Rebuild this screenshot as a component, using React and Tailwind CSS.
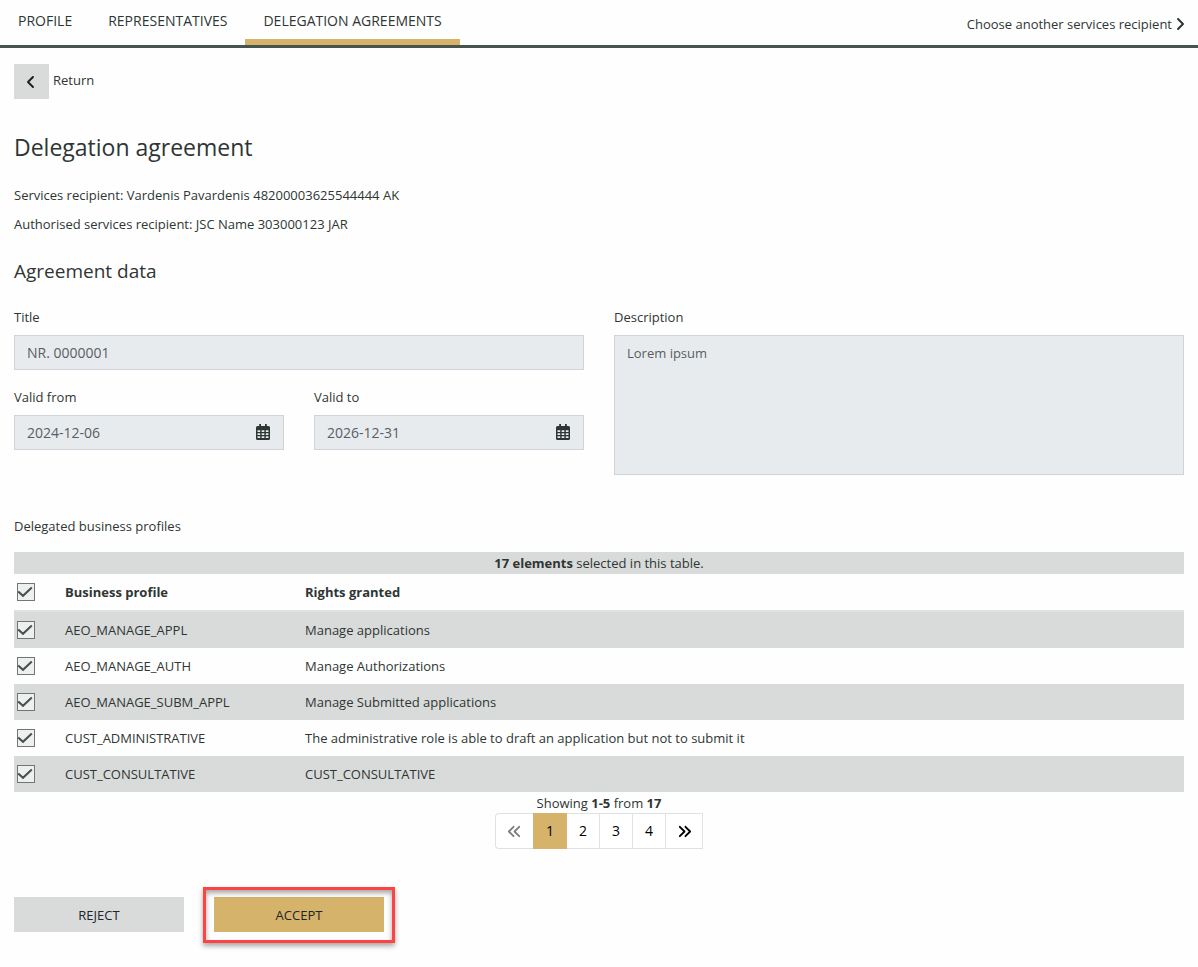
import React from "react";
import { FaAngleLeft, FaAngleRight, FaAnglesLeft, FaAnglesRight } from "react-icons/fa6";

const rows = [
  ["AEO_MANAGE_APPL", "Manage applications"],
  ["AEO_MANAGE_AUTH", "Manage Authorizations"],
  ["AEO_MANAGE_SUBM_APPL", "Manage Submitted applications"],
  ["CUST_ADMINISTRATIVE", "The administrative role is able to draft an application but not to submit it"],
  ["CUST_CONSULTATIVE", "CUST_CONSULTATIVE"],
];

function CalendarIcon() {
  return (
    <svg viewBox="0 0 14 16" className="mb-px h-4 w-[14px]" aria-hidden="true">
      <path
        fill="#2e3634"
        fillRule="evenodd"
        d="M3.200 0H5v2h4V0h1.800v2H12.500A1.500 1.500 0 0 1 14 3.500v11a1.500 1.500 0 0 1-1.500 1.500h-11A1.500 1.500 0 0 1 0 14.500v-11A1.500 1.500 0 0 1 1.500 2h1.700zM1.500 6.300v1.700h2.700V6.300zM5.650 6.300v1.700h2.700V6.300zM9.800 6.300v1.700h2.700V6.300zM1.500 9.300v1.700h2.700V9.300zM5.650 9.300v1.700h2.700V9.300zM9.800 9.300v1.700h2.700V9.300zM1.500 12.300v1.700h2.700v-1.700zM5.650 12.300v1.700h2.700v-1.700zM9.800 12.300v1.700h2.700v-1.700z"
      />
    </svg>
  );
}

function Check({ label }) {
  return (
    <span className="grid h-[18px] w-[18px] place-items-center">
      <input
        type="checkbox"
        defaultChecked
        aria-label={label}
        className="peer col-start-1 row-start-1 h-[18px] w-[18px] appearance-none border border-[#6f7775] bg-[#efefef]"
      />
      <svg
        viewBox="0 0 18 18"
        className="pointer-events-none invisible col-start-1 row-start-1 h-[18px] w-[18px] peer-checked:visible"
        aria-hidden="true"
      >
        <path d="M1.200 8.500 6 12.800 14.800 4.500" fill="none" stroke="#44524f" strokeWidth="2" />
      </svg>
    </span>
  );
}

function Tab({ children, active }) {
  return (
    <a
      href="#"
      aria-current={active ? "page" : undefined}
      className={
        active
          ? "border-b-6 border-[#d6b36a] px-[18px] pt-[11px] pb-2"
          : "border-b-6 border-transparent px-[18px] pt-[11px] pb-2"
      }
    >
      {children}
    </a>
  );
}

function DateField({ id, label, value }) {
  return (
    <div className="flex-1">
      <label htmlFor={id} className="block">{label}</label>
      <div className="mt-2 flex h-[35px] items-center border border-[#ced4da] bg-[#e8ebee] pr-[13px]">
        <input id={id} readOnly defaultValue={value} className="min-w-0 flex-1 bg-transparent px-3 text-[14px] text-[#585d63]" />
        <button type="button" aria-label={"Open calendar: " + label}>
          <CalendarIcon />
        </button>
      </div>
    </div>
  );
}

const page = "flex w-[33px] items-center justify-center border-r border-[#dee2e6]";

export default function App() {
  return (
    <div className="min-h-screen bg-[#fefefe] pb-9 font-['Open_Sans','Noto_Sans',sans-serif] text-[13px] leading-5 text-[#2e3634]">
      <header className="flex items-start justify-between border-b-3 border-[#465450]">
        <nav className="flex h-[45px] text-[14px]">
          <Tab>PROFILE</Tab>
          <Tab>REPRESENTATIVES</Tab>
          <Tab active>DELEGATION AGREEMENTS</Tab>
        </nav>
        <a href="#" className="mt-[14px] mr-[13px] flex items-center gap-[3px]">
          Choose another services recipient
          <FaAngleRight className="h-4 w-[10px]" />
        </a>
      </header>

      <main className="px-[14px] pt-4">
        <a href="#" className="flex w-fit gap-1">
          <span className="flex h-[35px] w-[35px] items-center justify-center bg-[#d9dbda] pr-0.5 text-[#1c2120]">
            <FaAngleLeft size={16} />
          </span>
          <span className="mt-[6px]">Return</span>
        </a>

        <h1 className="mt-8 text-[23px] leading-8">Delegation agreement</h1>
        <p className="mt-[22px]">Services recipient: Vardenis Pavardenis 48200003625544444 AK</p>
        <p className="mt-[9px]">Authorised services recipient: JSC Name 303000123 JAR</p>
        <h2 className="mt-[23px] text-[19px] leading-7">Agreement data</h2>

        <form className="mt-[22px] flex gap-[30px]">
          <div className="flex-1">
            <label htmlFor="title" className="block">Title</label>
            <input
              id="title"
              readOnly
              defaultValue="NR. 0000001"
              className="mt-2 block h-[35px] w-full border border-[#ced4da] bg-[#e8ebee] px-3 text-[14px] text-[#585d63]"
            />
            <div className="mt-[17px] flex gap-[30px]">
              <DateField id="from" label="Valid from" value="2024-12-06" />
              <DateField id="to" label="Valid to" value="2026-12-31" />
            </div>
          </div>
          <div className="flex-1">
            <label htmlFor="description" className="block">Description</label>
            <textarea
              id="description"
              readOnly
              defaultValue="Lorem ipsum"
              className="mt-2 block h-[140px] w-full resize-none border border-[#ced4da] bg-[#e8ebee] px-3 py-[7px] text-[#585d63]"
            />
          </div>
        </form>

        <h3 className="mt-[41px]">Delegated business profiles</h3>
        <table className="mt-4 w-full table-fixed border-separate border-spacing-0 text-left">
          <colgroup>
            <col className="w-[45px]" />
            <col className="w-[240px]" />
            <col />
          </colgroup>
          <thead>
            <tr className="h-[22px] bg-[#d9dbda]">
              <td colSpan={3} className="text-center"><b>17 elements</b> selected in this table.</td>
            </tr>
            <tr className="h-[38px] *:border-b-2 *:border-[#dee0e4]">
              <th className="pl-[3px]"><Check label="Select all" /></th>
              <th className="pl-[6px]">Business profile</th>
              <th className="pl-[6px]">Rights granted</th>
            </tr>
          </thead>
          <tbody>
            {rows.map(([name, rights]) => (
              <tr key={name} className="h-9 odd:bg-[#d9dbda]">
                <td className="pl-[3px]"><Check label={name} /></td>
                <td className="pl-[6px]">{name}</td>
                <td className="pl-[6px]">{rights}</td>
              </tr>
            ))}
          </tbody>
        </table>

        <div className="mt-[1px] flex flex-col items-center">
          <p>Showing <b>1-5</b> from <b>17</b></p>
          <nav aria-label="Pages" className="flex h-9 rounded-l border border-r-0 border-[#dee2e6] bg-white text-[14px] text-black">
            <button type="button" disabled aria-label="Previous" className="flex w-[37px] items-center justify-center text-[#7b7f82]">
              <FaAnglesLeft size={15} />
            </button>
            <button type="button" aria-current="page" className="-my-px flex w-[34px] items-center justify-center bg-[#d6b36a]">1</button>
            <button type="button" className={page}>2</button>
            <button type="button" className={page}>3</button>
            <button type="button" className={page}>4</button>
            <button type="button" aria-label="Next" className="flex w-[37px] items-center justify-center border-r border-[#dee2e6]">
              <FaAnglesRight size={15} />
            </button>
          </nav>
        </div>

        <div className="mt-12 flex gap-[30px] text-[13px] text-[#212529]">
          <button type="button" className="h-[35px] w-[170px] bg-[#d9dbda]">REJECT</button>
          <span className="relative flex">
            <button type="button" className="h-[35px] w-[170px] bg-[#d6b36a]">ACCEPT</button>
            <span className="pointer-events-none absolute -top-[10px] -right-[11px] -bottom-[11px] -left-[11px] border-3 border-[#ff4343] shadow-[0_3px_5px_rgba(0,0,0,0.35),inset_0_3px_5px_rgba(0,0,0,0.35)]" />
          </span>
        </div>
      </main>
    </div>
  );
}
